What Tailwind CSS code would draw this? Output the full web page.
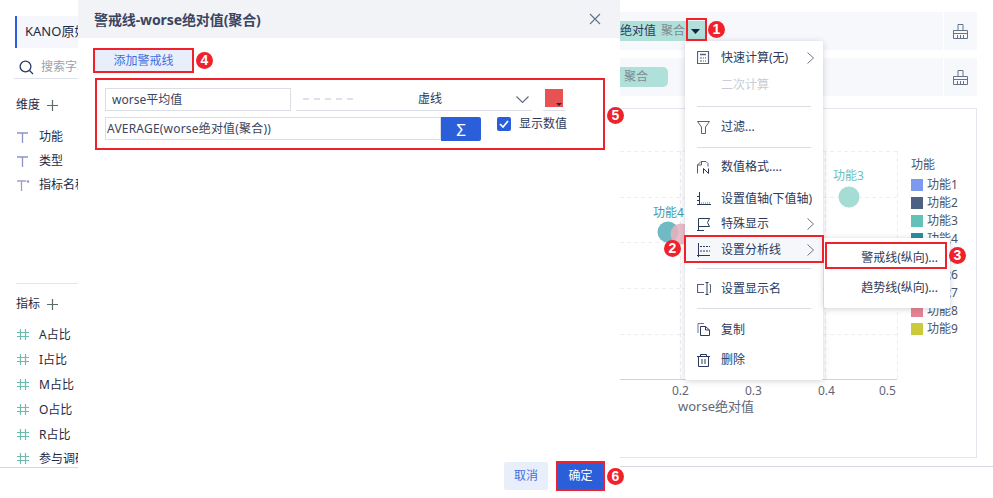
<!DOCTYPE html>
<html lang="zh-CN">
<head>
  <meta charset="UTF-8">
  <title>警戒线</title>
  <script src="https://cdn.jsdelivr.net/npm/@tailwindcss/browser@4"></script>
</head>
<body class="bg-white">
  <div class="relative flex w-[993px] h-[498px] overflow-hidden font-['Noto_Sans','Noto_Sans_CJK_SC',sans-serif] text-[12px] text-[#2b3a5c]">

    <!-- left field panel -->
    <aside class="w-[78px] h-full shrink-0 flex flex-col overflow-hidden whitespace-nowrap text-[#1f2a44]">
      <div class="mt-[16px] ml-[15px] h-[32px] flex items-center border-l-2 border-[#2b5fd9] bg-[#f5f7fd] pl-[8px] text-[13px]">KANO原始数据</div>
      <div class="mt-[10px] ml-[14px] h-[21px] pb-[2px] flex items-center gap-[7px] border-b border-[#dfe2ea] text-[#9aa1ae]">
        <svg class="ml-[5px] shrink-0" width="15" height="15" viewBox="0 0 15 15" fill="none" stroke="#2b3a5c" stroke-width="1.3"><circle cx="6.500" cy="6.500" r="5.400"/><path d="M10.500 10.500l3.500 3.500"/></svg>
        <span>搜索字段</span>
      </div>
      <div class="mt-[17px] ml-[16px] h-[18px] flex items-center gap-[7px]">维度
        <svg class="shrink-0" width="11" height="11" viewBox="0 0 11 11" stroke="#5c6b66" stroke-width="1.200"><path d="M5.500 0v11M0 5.500h11"/></svg>
      </div>
      <div class="mt-[11px] ml-[17px] flex flex-col">
        <div class="h-[24px] flex items-center gap-[11px]"><svg class="shrink-0" width="11" height="11" viewBox="0 0 11 11" stroke="#8d93c9" stroke-width="1.300" fill="none"><path d="M0 1h11M5.500 1v10"/></svg>功能</div>
        <div class="h-[24px] flex items-center gap-[11px]"><svg class="shrink-0" width="11" height="11" viewBox="0 0 11 11" stroke="#8d93c9" stroke-width="1.300" fill="none"><path d="M0 1h11M5.500 1v10"/></svg>类型</div>
        <div class="h-[24px] flex items-center gap-[9px]"><svg class="shrink-0" width="13" height="11" viewBox="0 0 13 11" stroke="#a79cc9" stroke-width="1.300" fill="none"><path d="M0 1h9M4.500 1v10M11 0v3M9.700 1.500h2.600"/></svg>指标名称</div>
      </div>
      <div class="mt-[86px] ml-[16px] border-t border-[#e3e5ec]"></div>
      <div class="mt-[11px] ml-[16px] h-[18px] flex items-center gap-[7px]">指标
        <svg class="shrink-0" width="11" height="11" viewBox="0 0 11 11" stroke="#5c6b66" stroke-width="1.200"><path d="M5.500 0v11M0 5.500h11"/></svg>
      </div>
      <div class="mt-[9px] ml-[17px] flex flex-col">
        <div class="h-[25px] flex items-center gap-[10px]"><svg class="shrink-0" width="12" height="11" viewBox="0 0 12 11" stroke="#6fbcae" stroke-width="1.200"><path d="M3.500 0v11M8.500 0v11M0 3.500h12M0 7.500h12"/></svg>A占比</div>
        <div class="h-[25px] flex items-center gap-[10px]"><svg class="shrink-0" width="12" height="11" viewBox="0 0 12 11" stroke="#6fbcae" stroke-width="1.200"><path d="M3.500 0v11M8.500 0v11M0 3.500h12M0 7.500h12"/></svg>I占比</div>
        <div class="h-[25px] flex items-center gap-[10px]"><svg class="shrink-0" width="12" height="11" viewBox="0 0 12 11" stroke="#6fbcae" stroke-width="1.200"><path d="M3.500 0v11M8.500 0v11M0 3.500h12M0 7.500h12"/></svg>M占比</div>
        <div class="h-[25px] flex items-center gap-[10px]"><svg class="shrink-0" width="12" height="11" viewBox="0 0 12 11" stroke="#6fbcae" stroke-width="1.200"><path d="M3.500 0v11M8.500 0v11M0 3.500h12M0 7.500h12"/></svg>O占比</div>
        <div class="h-[25px] flex items-center gap-[10px]"><svg class="shrink-0" width="12" height="11" viewBox="0 0 12 11" stroke="#6fbcae" stroke-width="1.200"><path d="M3.500 0v11M8.500 0v11M0 3.500h12M0 7.500h12"/></svg>R占比</div>
        <div class="h-[20px] pt-[3px] flex items-center gap-[10px]"><svg class="shrink-0" width="12" height="11" viewBox="0 0 12 11" stroke="#6fbcae" stroke-width="1.200"><path d="M3.500 0v11M8.500 0v11M0 3.500h12M0 7.500h12"/></svg>参与调研</div>
      </div>
      <div class="border-t border-[#d5d8e2]"></div>
    </aside>

    <!-- dialog -->
    <section class="w-[542px] h-full shrink-0 flex flex-col bg-white">
      <header class="h-[38px] bg-[#f2f3f7] flex items-center justify-between pl-[16px] pr-[19px]">
        <h2 class="text-[14px] font-bold tracking-[-0.1px] text-[#3a4560]">警戒线-worse绝对值(聚合)</h2>
        <svg width="12" height="12" viewBox="0 0 12 12" stroke="#5d7388" stroke-width="1.100"><path d="M1 1l10 10M11 1L1 11"/></svg>
      </header>
      <div class="flex-1 flex flex-col pl-[15px]">
        <button class="mt-[10px] w-[101px] h-[25px] border-2 border-[#f0212b] bg-[#e8effb] text-[#3d6fe0]">添加警戒线</button>
        <div class="mt-[5px] ml-[2px] w-[510px] h-[72px] border-2 border-[#f0212b] pl-[8px] pt-[8px] flex flex-col gap-[5px]">
          <div class="flex h-[24px]">
            <div class="w-[186px] h-[23px] border border-[#dcdee6] flex items-center pl-[6px] text-[#3a4560]">worse平均值</div>
            <div class="ml-[5px] w-[236px] h-[23px] border-b border-[#dcdee6] flex items-center pl-[7px]">
              <svg class="shrink-0" width="52" height="2" viewBox="0 0 52 2"><path d="M0 1h52" stroke="#d5d8e0" stroke-width="1.500" stroke-dasharray="6 5"/></svg>
              <span class="ml-[63px] text-[#2b3a5c]">虚线</span>
              <svg class="ml-[74px] shrink-0" width="13" height="7" viewBox="0 0 13 7" fill="none" stroke="#5b6b85" stroke-width="1.100"><path d="M.5.500l6 6 6-6"/></svg>
            </div>
            <div class="ml-[11px] w-[22px] h-[23px] border-b border-[#dcdee6] flex justify-center pt-[1px]">
              <div class="relative w-[18px] h-[18px] bg-[#e75252]"><span class="absolute right-[1px] bottom-[1px] border-x-[3px] border-t-[3px] border-x-transparent border-t-[#1f2a44]"></span></div>
            </div>
          </div>
          <div class="flex h-[24px]">
            <div class="w-[336px] h-[23px] border border-[#dcdee6] flex items-center pl-[1px] tracking-[0.2px] text-[#3a4560]">AVERAGE(worse绝对值(聚合))</div>
            <div class="w-[40px] h-[24px] bg-[#2b5fd9] rounded-r-[2px] flex items-center justify-center text-white text-[17px] leading-none">Σ</div>
            <div class="ml-[16px] flex items-start gap-[8px]">
              <span class="w-[14px] h-[14px] rounded-[2px] bg-[#2b5fd9] flex items-center justify-center"><svg width="10" height="8" viewBox="0 0 10 8" fill="none" stroke="#fff" stroke-width="1.700"><path d="M1 4l3 3 5-6"/></svg></span>
              <span class="leading-[14px]">显示数值</span>
            </div>
          </div>
        </div>
        <div class="mt-auto mb-[7px] flex justify-end items-center pr-[15px] gap-[8px]">
          <button class="w-[44px] h-[28px] rounded-[2px] bg-[#e8effb] text-[#3d6fe0]">取消</button>
          <button class="w-[49px] h-[30px] border-2 border-[#f0212b] bg-[#2b5fd9] text-white">确定</button>
        </div>
      </div>
    </section>

    <!-- right chart area -->
    <main class="flex-1 h-full flex flex-col pt-[12px]">
      <div class="flex h-[38px] mr-[16px] bg-[#f7f8fc]">
        <div class="flex-1 pt-[9px]">
          <div class="w-[86px] h-[20px] bg-[#b0e0da] flex items-center whitespace-nowrap overflow-hidden">
            <span class="text-[#2b3a5c] w-[35px] text-right">绝对值</span><span class="ml-[6px] text-[#7f8b94]">聚合</span>
            <svg class="ml-[6px] shrink-0" width="9" height="5" viewBox="0 0 9 5"><path d="M0 0h9L4.500 5z" fill="#14233f"/></svg>
          </div>
        </div>
        <div class="w-[34px] ml-[1px] border-l border-white flex items-center justify-center">
          <svg width="15" height="15" viewBox="0 0 15 15" fill="none" stroke="#67738a"><path d="M5 6V.5h5V6M.5 14.500V6.500h14v8zM.5 9.500h14"/><path d="M4.500 11v3.500M7.500 11v3.500M10.500 11v3.500"/></svg>
        </div>
      </div>
      <div class="flex h-[38px] mt-[8px] mr-[16px] bg-[#f7f8fc]">
        <div class="flex-1 pt-[9px]">
          <div class="w-[48px] h-[20px] rounded-r-[5px] bg-[#b0e0da] flex items-center pl-[4px] text-[#7f8b94]">聚合</div>
        </div>
        <div class="w-[34px] ml-[1px] border-l border-white flex items-center justify-center">
          <svg width="15" height="15" viewBox="0 0 15 15" fill="none" stroke="#67738a"><path d="M5 6V.5h5V6M.5 14.500V6.500h14v8zM.5 9.500h14"/><path d="M4.500 11v3.500M7.500 11v3.500M10.500 11v3.500"/></svg>
        </div>
      </div>
      <div class="relative mt-[12px] mr-[16px] h-[350px] border border-l-0 border-[#e4e6ef]">
        <svg class="absolute left-0 top-0" width="290" height="290" viewBox="0 0 290 290" fill="none">
          <g stroke="#eceef2" stroke-dasharray="4 3">
            <path d="M0 42.500h277M0 88.500h277M0 133.500h277M0 179.500h277M0 225.500h277"/>
            <path d="M60.500 42v228M133.500 42v228M205.500 42v228M277.500 42v228"/>
          </g>
          <path d="M0 270.500h277" stroke="#cfd2da"/>
          <circle cx="229" cy="88" r="10.500" fill="#a5dcd4"/>
          <circle cx="48" cy="123" r="10.500" fill="#70bac3"/>
          <circle cx="61" cy="125" r="10.500" fill="#e8b2c0" fill-opacity=".85"/>
        </svg>
        <span class="absolute left-[213px] top-[58px] text-[#6cc2b8]">功能3</span>
        <span class="absolute left-[33px] top-[95px] text-[#3f9aa8]">功能4</span>
        <span class="absolute left-[52px] top-[273px] text-[#5f6677]">0.2</span>
        <span class="absolute left-[125px] top-[273px] text-[#5f6677]">0.3</span>
        <span class="absolute left-[198px] top-[273px] text-[#5f6677]">0.4</span>
        <span class="absolute left-[259px] top-[273px] text-[#5f6677]">0.5</span>
        <span class="absolute left-[58px] top-[288px] text-[13px] text-[#5f6677]">worse绝对值</span>
        <div class="absolute left-[291px] top-[45px] flex flex-col text-[#4a5568]">
          <div class="h-[22px] flex items-center">功能</div>
          <div class="h-[18px] flex items-center gap-[4px]"><i class="w-[12px] h-[12px] bg-[#7c9aee]"></i>功能1</div>
          <div class="h-[18px] flex items-center gap-[4px]"><i class="w-[12px] h-[12px] bg-[#4d6185]"></i>功能2</div>
          <div class="h-[18px] flex items-center gap-[4px]"><i class="w-[12px] h-[12px] bg-[#63c2b8]"></i>功能3</div>
          <div class="h-[18px] flex items-center gap-[4px]"><i class="w-[12px] h-[12px] bg-[#2a8d9e]"></i>功能4</div>
          <div class="h-[18px] flex items-center gap-[4px]"><i class="w-[12px] h-[12px] bg-[#8a7fc9]"></i>功能5</div>
          <div class="h-[18px] flex items-center gap-[4px]"><i class="w-[12px] h-[12px] bg-[#9ac0e8]"></i>功能6</div>
          <div class="h-[18px] flex items-center gap-[4px]"><i class="w-[12px] h-[12px] bg-[#e6a15c]"></i>功能7</div>
          <div class="h-[18px] flex items-center gap-[4px]"><i class="w-[12px] h-[12px] bg-[#e88395]"></i>功能8</div>
          <div class="h-[18px] flex items-center gap-[4px]"><i class="w-[12px] h-[12px] bg-[#c9cb3a]"></i>功能9</div>
        </div>
      </div>
      <div class="mt-[8px] border-t border-[#d5d8e2]"></div>
    </main>

    <!-- context menu -->
    <div class="absolute left-[685px] top-[41px] w-[138px] h-[339px] bg-white rounded-[2px] shadow-[0_1px_6px_rgba(40,50,80,0.22)] pt-[3px] flex flex-col whitespace-nowrap">
      <div class="h-[28px] flex items-center pl-[12px] pr-[9px]">
        <svg class="shrink-0" width="13" height="14" viewBox="0 0 13 14" fill="none" stroke="#55617a"><path d="M.5.500h11v12H.5z" stroke-width="1.200"/><path d="M3 3.500h6" stroke-width="1.500"/><path d="M3 7h2M6 7h1M8 7h1M3 10h2M6 10h1M8 10h1"/></svg>
        <span class="ml-[11px]">快速计算(无)</span>
        <svg class="ml-auto shrink-0" width="7" height="12" viewBox="0 0 7 12" fill="none" stroke="#6a7488"><path d="M.5.500l6 5.500-6 5.500"/></svg>
      </div>
      <div class="h-[26px] flex items-center pl-[36px] text-[#c8ccd4]">二次计算</div>
      <div class="mt-[8px] mx-[12px] border-t border-[#dcdee6]"></div>
      <div class="h-[40px] flex items-center pl-[12px]">
        <svg class="shrink-0" width="13" height="13" viewBox="0 0 13 13" fill="none" stroke="#55617a"><path d="M.5.500h12L8.500 6v6.500h-4V6z"/></svg>
        <span class="ml-[11px]">过滤...</span>
      </div>
      <div class="mx-[12px] border-t border-[#dcdee6]"></div>
      <div class="h-[38px] flex items-center pl-[12px]">
        <svg class="shrink-0" width="13" height="13" viewBox="0 0 13 13" fill="none" stroke="#55617a"><path d="M.5 12.500V4L4 .5h5l2 2v3M4.500 .5V4H.5"/><path d="M6.500 12.500v-5l5 5v-5" stroke="#2b3a5c"/></svg>
        <span class="ml-[11px]">数值格式....</span>
      </div>
      <div class="h-[25px] flex items-center pl-[12px]">
        <svg class="shrink-0" width="14" height="14" viewBox="0 0 14 14" fill="none" stroke="#2b3a5c"><path d="M2.500 0v13"/><path d="M0 12.500h14" /><path d="M0 4.500h2M0 8.500h2" /><path d="M4 11h10" stroke="#6a7488" stroke-dasharray="1 1"/></svg>
        <span class="ml-[10px]">设置值轴(下值轴)</span>
      </div>
      <div class="h-[26px] flex items-center pl-[12px] pr-[9px]">
        <svg class="shrink-0" width="13" height="13" viewBox="0 0 13 13" fill="none" stroke="#2b3a5c"><path d="M1.500 13V.5h11l-2 4 2 4h-11M0 12.500h7"/></svg>
        <span class="ml-[11px]">特殊显示</span>
        <svg class="ml-auto shrink-0" width="7" height="12" viewBox="0 0 7 12" fill="none" stroke="#6a7488"><path d="M.5.500l6 5.500-6 5.500"/></svg>
      </div>
      <div class="h-[26px] flex items-center pl-[12px] pr-[9px] bg-[#f5f7fb]">
        <svg class="shrink-0" width="13" height="14" viewBox="0 0 13 14" fill="none" stroke="#2b3a5c"><path d="M1.500 0v14M0 12.500h13"/><path d="M3 3.500h10M3 8h10" stroke-dasharray="2 1"/></svg>
        <span class="ml-[11px]">设置分析线</span>
        <svg class="ml-auto shrink-0" width="7" height="12" viewBox="0 0 7 12" fill="none" stroke="#6a7488"><path d="M.5.500l6 5.500-6 5.500"/></svg>
      </div>
      <div class="mt-[5px] mx-[12px] border-t border-[#dcdee6]"></div>
      <div class="h-[39px] flex items-center pl-[12px]">
        <svg class="shrink-0" width="14" height="13" viewBox="0 0 14 13" fill="none" stroke="#55617a"><path d="M7 2.500H.5v8H7" stroke-width="1.200"/><path d="M10 .5v12M8.500.5h3M8.500 12.500h3" stroke="#2b3a5c"/><path d="M12.500 2.500h1v8h-1"/></svg>
        <span class="ml-[10px]">设置显示名</span>
      </div>
      <div class="mx-[12px] border-t border-[#dcdee6]"></div>
      <div class="h-[41px] flex items-center pl-[12px]">
        <svg class="shrink-0" width="13" height="13" viewBox="0 0 13 13" fill="none" stroke="#2b3a5c"><path d="M3.500 3.500h5l4 3.500v5.500h-9zM8.500 3.500V7h4"/><path d="M1 10V.5h6" stroke="#6a7488"/></svg>
        <span class="ml-[11px]">复制</span>
      </div>
      <div class="h-[20px] flex items-center pl-[12px]">
        <svg class="shrink-0" width="13" height="13" viewBox="0 0 13 13" fill="none" stroke="#2b3a5c"><path d="M0 2.500h13M3.500 2.500V.5h6v2M1.500 2.500v10h10v-10M5 5v5M8 5v5"/></svg>
        <span class="ml-[11px]">删除</span>
      </div>
    </div>

    <!-- submenu -->
    <div class="absolute left-[824px] top-[238px] w-[126px] h-[70px] bg-white rounded-[2px] shadow-[0_1px_6px_rgba(40,50,80,0.22)] pt-[7px] pr-[12px] flex flex-col items-end whitespace-nowrap">
      <div class="h-[26px] flex items-center">警戒线(纵向)...</div>
      <div class="mt-[4px] h-[26px] flex items-center">趋势线(纵向)...</div>
    </div>

    <!-- red annotation frames -->
    <div class="absolute left-[686px] top-[18px] w-[21px] h-[23px] border-2 border-[#f0212b]"></div>
    <div class="absolute left-[684px] top-[235px] w-[140px] h-[28px] border-2 border-[#f0212b]"></div>
    <div class="absolute left-[825px] top-[242px] w-[122px] h-[27px] border-2 border-[#f0212b]"></div>

    <!-- numbered badges -->
    <span class="absolute left-[708px] top-[21px] w-[17px] h-[17px] rounded-full bg-[#f0212b] text-white font-['Liberation_Sans'] font-bold text-[14px] leading-[17px] text-center">1</span>
    <span class="absolute left-[664px] top-[240px] w-[17px] h-[17px] rounded-full bg-[#f0212b] text-white font-['Liberation_Sans'] font-bold text-[14px] leading-[17px] text-center">2</span>
    <span class="absolute left-[949px] top-[247px] w-[17px] h-[17px] rounded-full bg-[#f0212b] text-white font-['Liberation_Sans'] font-bold text-[14px] leading-[17px] text-center">3</span>
    <span class="absolute left-[196px] top-[52px] w-[17px] h-[17px] rounded-full bg-[#f0212b] text-white font-['Liberation_Sans'] font-bold text-[14px] leading-[17px] text-center">4</span>
    <span class="absolute left-[607px] top-[107px] w-[17px] h-[17px] rounded-full bg-[#f0212b] text-white font-['Liberation_Sans'] font-bold text-[14px] leading-[17px] text-center">5</span>
    <span class="absolute left-[607px] top-[468px] w-[17px] h-[17px] rounded-full bg-[#f0212b] text-white font-['Liberation_Sans'] font-bold text-[14px] leading-[17px] text-center">6</span>
  </div>
</body>
</html>
